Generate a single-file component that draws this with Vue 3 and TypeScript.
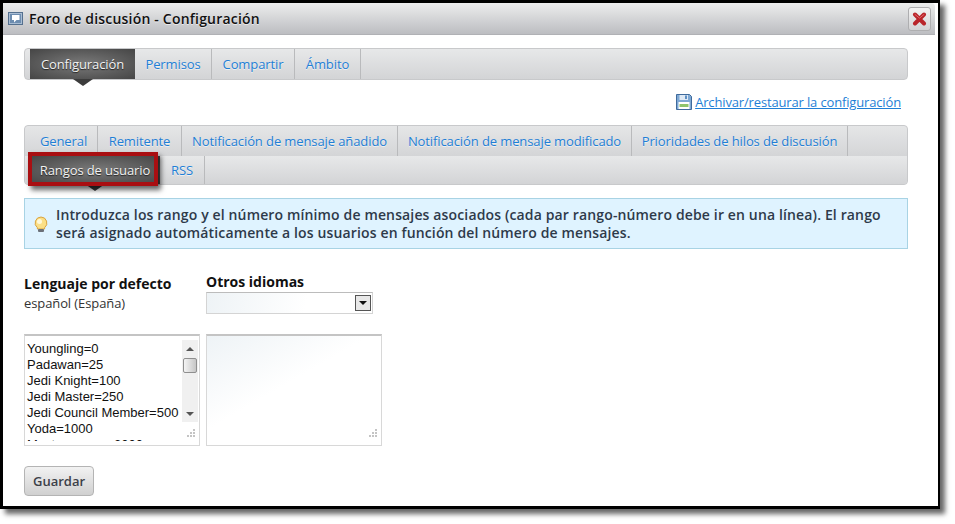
<template>
  <div class="page">
    <div class="frame">
      <header class="head">
        <svg class="head-icon" width="15" height="13" viewBox="0 0 15 13">
          <rect x="0.5" y="0.5" width="14" height="12" fill="#a9bdd3" stroke="#54708f" />
          <rect x="2" y="2" width="11" height="9" fill="#6d8db0" />
          <path d="M4 3h7.500v5H8.500L6 10.500V8H4z" fill="#fff" />
        </svg>
        <span class="head-title">Foro de discusión - Configuración</span>
        <button class="close">
          <svg width="15" height="14" viewBox="0 0 15 14">
            <path d="M3 2.500l9 9M12 2.500l-9 9" fill="none" stroke="#b9252a" stroke-width="4" stroke-linecap="round" />
            <path d="M3 2.500l4.500 3.600L12 2.500" fill="none" stroke="#e0666a" stroke-width="1" stroke-linecap="round" />
          </svg>
        </button>
      </header>

      <main class="body">
        <nav class="tabs top">
          <div class="row">
            <a v-for="t in mainTabs" :key="t.label" class="tab" :class="{ active: t.active }" :style="{ width: t.w + 'px' }">{{ t.label }}</a>
          </div>
        </nav>

        <div class="backup">
          <svg width="16" height="16" viewBox="0 0 16 16">
            <path d="M0.500 0.500h13l2 2v13h-15z" fill="#7ea8d4" stroke="#3f6a9c" />
            <rect x="3.500" y="1" width="8.500" height="5" fill="#dfe9f4" />
            <rect x="9" y="1.500" width="2" height="3.500" fill="#5d8fc4" />
            <rect x="2.500" y="8" width="11" height="7" fill="#fff" />
            <rect x="3.500" y="10" width="9" height="3" fill="#8fc46c" />
          </svg>
          <a class="backup-link">Archivar/restaurar la configuración</a>
        </div>

        <nav class="tabs sub">
          <div class="row first">
            <a v-for="t in subTabs" :key="t.label" class="tab" :style="{ width: t.w + 'px' }">{{ t.label }}</a>
          </div>
          <div class="row second">
            <a class="tab active rangos">Rangos de usuario</a>
            <a class="tab rss">RSS</a>
          </div>
          <div class="highlight"></div>
        </nav>

        <div class="info">
          <svg class="bulb" width="16" height="17" viewBox="0 0 16 17">
            <path d="M8 1a6 6 0 0 0-3.600 10.700V13h7.200v-1.300A6 6 0 0 0 8 1z" fill="#fbdf86" stroke="#d9a441" />
            <circle cx="6.500" cy="5.500" r="2.500" fill="#fff8d8" />
            <rect x="5" y="13" width="6" height="3" rx="1" fill="#6b7078" />
          </svg>
          <p>Introduzca los rango y el número mínimo de mensajes asociados (cada par rango-número debe ir en una línea). El rango será asignado automáticamente a los usuarios en función del número de mensajes.</p>
        </div>

        <section class="langs">
          <div class="default-lang">
            <h4>Lenguaje por defecto</h4>
            <div class="lang-name">español (España)</div>
          </div>
          <div class="other-lang">
            <h4>Otros idiomas</h4>
            <div class="select">
              <span class="select-btn"></span>
            </div>
          </div>
        </section>

        <section class="areas">
          <div class="area filled">
            <div class="lines">
              <div v-for="l in ranks" :key="l">{{ l }}</div>
            </div>
            <div class="scroll">
              <span class="up"></span>
              <span class="thumb"></span>
              <span class="down"></span>
            </div>
            <svg class="grip" width="10" height="10" viewBox="0 0 10 10">
              <path d="M8 1h2v2H8zM5 4h2v2H5zM8 4h2v2H8zM2 7h2v2H2zM5 7h2v2H5zM8 7h2v2H8z" fill="#c4c4c4" />
            </svg>
          </div>
          <div class="area empty">
            <svg class="grip" width="10" height="10" viewBox="0 0 10 10">
              <path d="M8 1h2v2H8zM5 4h2v2H5zM8 4h2v2H8zM2 7h2v2H2zM5 7h2v2H5zM8 7h2v2H8z" fill="#c4c4c4" />
            </svg>
          </div>
        </section>

        <button class="save">Guardar</button>
      </main>
    </div>
  </div>
</template>

<script setup lang="ts">
const mainTabs = [
  { label: "Configuración", w: 105, active: true },
  { label: "Permisos", w: 77, active: false },
  { label: "Compartir", w: 83, active: false },
  { label: "Ámbito", w: 66, active: false },
];
const subTabs = [
  { label: "General", w: 68 },
  { label: "Remitente", w: 84 },
  { label: "Notificación de mensaje añadido", w: 216 },
  { label: "Notificación de mensaje modificado", w: 234 },
  { label: "Prioridades de hilos de discusión", w: 216 },
];
const ranks = [
  "Youngling=0",
  "Padawan=25",
  "Jedi Knight=100",
  "Jedi Master=250",
  "Jedi Council Member=500",
  "Yoda=1000",
  "Master mayor=2000",
];
</script>

<style>
html,
body {
  margin: 0;
  background: #fff;
}
</style>

<style scoped>
.page {
  height: 524px;
  overflow: hidden;
}

.frame {
  box-sizing: border-box;
  width: 940px;
  height: 509px;
  border: 3px solid #000;
  border-right-width: 2px;
  background: #fff;
  box-shadow: 5px 5px 5px rgba(0, 0, 0, 0.6);
  font-family: "Open Sans", sans-serif;
  font-size: 13px;
  color: #333;
}

.head {
  display: flex;
  align-items: center;
  height: 32px;
  margin-right: 3px;
  padding: 0 4px 0 5px;
  background: linear-gradient(#eceded, #bcbdc1);
  border-radius: 0 4px 0 0;
  border-bottom: 1px solid #b0b1b5;
  box-sizing: border-box;
}

.head-icon {
  margin-right: 6px;
}

.head-title {
  font-size: 14px;
  font-weight: 600;
  letter-spacing: 0.2px;
  color: #111;
  flex: 1;
  text-shadow: 0 1px 0 rgba(255, 255, 255, 0.6);
}

.close {
  width: 23px;
  height: 24px;
  padding: 0;
  display: flex;
  align-items: center;
  justify-content: center;
  border: 1px solid #aeaeb0;
  border-radius: 3px;
  background: linear-gradient(#f3f3f3, #d2d2d4);
}

.body {
  padding: 13px 29px 0 21px;
}

.tabs {
  box-sizing: border-box;
  width: 884px;
  border: 1px solid #c8c9cb;
  border-radius: 4px;
  padding-left: 5px;
  background: linear-gradient(#e7e8e9, #d3d4d6);
}

.top {
  height: 32px;
}

.row {
  display: flex;
  height: 30px;
}

.tab {
  box-sizing: border-box;
  display: flex;
  align-items: center;
  justify-content: center;
  height: 30px;
  border-right: 1px solid #b9babc;
  color: #1f7fd6;
  font-size: 13px;
  letter-spacing: -0.1px;
  white-space: nowrap;
  text-shadow: 0 1px 0 rgba(255, 255, 255, 0.6);
}

.tab.active {
  position: relative;
  background: radial-gradient(ellipse at center, #7a7a7a, #454545);
  color: #f2f2f2;
  border-right: 0;
  text-shadow: 0 1px 1px #222;
}

.tab.active::after {
  content: "";
  position: absolute;
  left: 50%;
  top: 100%;
  margin-left: -10px;
  border-style: solid;
  border-width: 7px 10px 0;
  border-color: #3c3c3c transparent transparent;
}

.backup {
  display: flex;
  align-items: center;
  justify-content: flex-end;
  gap: 3px;
  height: 22px;
  margin: 11px 8px 12px 0;
}

.backup-link {
  color: #1f7fd6;
  font-size: 13px;
  letter-spacing: -0.15px;
  text-decoration: underline;
}

.sub {
  position: relative;
  height: 60px;
  background: #dcdddf;
}

.sub .first {
  margin-left: -5px;
  padding-left: 5px;
  width: 882px;
  box-sizing: border-box;
  background: linear-gradient(#e5e6e7, #d4d5d7);
  border-radius: 4px 4px 0 0;
}

.sub .second {
  margin-left: -5px;
  padding-left: 5px;
  background: linear-gradient(#e7e8e9, #d3d4d6);
  height: 28px;
  border-radius: 0 0 4px 4px;
}

.rangos {
  width: 130px;
  height: 28px;
}

.rss {
  width: 45px;
  height: 28px;
}

.highlight {
  position: absolute;
  left: 3px;
  top: 26px;
  width: 122px;
  height: 26px;
  border: 4px solid #a90f12;
  box-shadow: 3px 4px 5px rgba(0, 0, 0, 0.6);
}

.info {
  box-sizing: border-box;
  display: flex;
  align-items: center;
  width: 884px;
  height: 51px;
  margin-top: 13px;
  padding: 0 8px;
  background: #dff3ff;
  border: 1px solid #a8d3e4;
}

.bulb {
  flex: none;
  margin: 2px 7px 0 0;
}

.info p {
  margin: 0;
  font-size: 14px;
  font-weight: 600;
  letter-spacing: 0.14px;
  line-height: 18px;
  color: #2e3a4a;
}

.langs {
  display: flex;
  margin-top: 25px;
}

.default-lang {
  width: 182px;
  padding-top: 1px;
}

h4 {
  margin: 0;
  font-size: 14px;
  font-weight: 700;
  color: #111;
  line-height: 18px;
}

.lang-name {
  font-size: 13px;
  letter-spacing: -0.1px;
  line-height: 18px;
  margin-top: 1px;
}

.other-lang h4 {
  margin-top: -1px;
  margin-bottom: 1px;
}

.select {
  box-sizing: border-box;
  position: relative;
  width: 167px;
  height: 22px;
  border: 1px solid #d4d4d4;
  border-top-color: #bcbcbc;
  background: linear-gradient(100deg, #eef3f6, #fff 60%);
}

.select-btn {
  position: absolute;
  right: 1px;
  top: 2px;
  width: 16px;
  height: 16px;
  box-sizing: border-box;
  border: 1px solid #555;
  background: #e8e8e8;
}

.select-btn::after {
  content: "";
  position: absolute;
  left: 3px;
  top: 5px;
  border-style: solid;
  border-width: 4px 4px 0;
  border-color: #111 transparent transparent;
}

.areas {
  display: flex;
  gap: 6px;
  margin-top: 20px;
}

.area {
  box-sizing: border-box;
  position: relative;
  width: 176px;
  height: 112px;
  border: 1px solid #d8d8d8;
  border-top: 2px solid #c4c4c4;
  overflow: hidden;
}

.filled {
  background: #fff;
}

.empty {
  background: linear-gradient(150deg, #eef3f6, #fff 45%);
}

.lines {
  box-sizing: border-box;
  height: 105px;
  overflow: hidden;
  padding-top: 5px;
  padding-left: 2px;
  font-family: "Liberation Sans", Arial, sans-serif;
  font-size: 13px;
  line-height: 16px;
  color: #111;
  white-space: nowrap;
}

.scroll {
  position: absolute;
  right: 1px;
  top: 4px;
  width: 16px;
  height: 82px;
  background: #f0f0f0;
}

.up,
.down {
  position: absolute;
  left: 4px;
  border-style: solid;
  border-color: transparent;
}

.up {
  top: 7px;
  border-width: 0 4px 4px;
  border-bottom-color: #555;
}

.down {
  bottom: 6px;
  border-width: 4px 4px 0;
  border-top-color: #555;
}

.thumb {
  position: absolute;
  left: 1px;
  top: 18px;
  width: 14px;
  height: 15px;
  box-sizing: border-box;
  border: 1px solid #8f8f8f;
  border-radius: 2px;
  background: linear-gradient(90deg, #f4f4f4, #c6c6c6);
}

.grip {
  position: absolute;
  right: 4px;
  bottom: 7px;
}

.save {
  display: block;
  width: 70px;
  height: 30px;
  margin-top: 20px;
  padding: 0;
  border: 1px solid #b4b4b4;
  border-radius: 4px;
  background: linear-gradient(#f2f2f2, #d0d0d0);
  font-family: "Open Sans", sans-serif;
  font-size: 13px;
  font-weight: 600;
  color: #3c4048;
}
</style>
